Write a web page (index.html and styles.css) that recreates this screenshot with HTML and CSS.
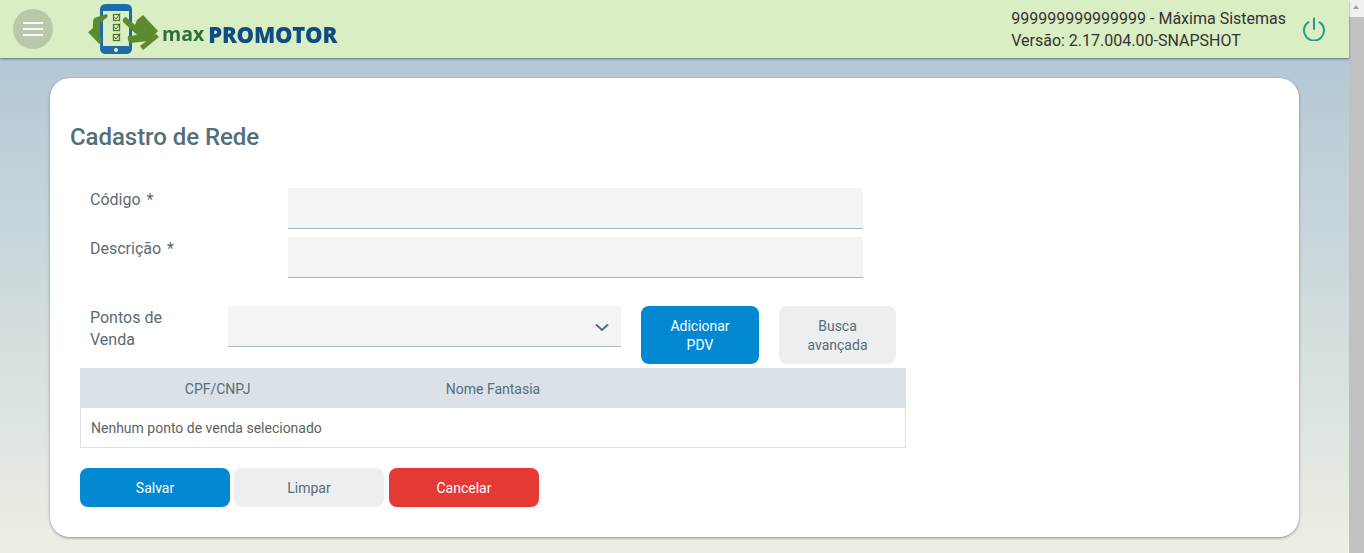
FILE: index.html
```html
<!DOCTYPE html>
<html lang="en">
<head>
    <meta charset="UTF-8">
    <title>maxPromotor</title>
    <link rel="stylesheet" href="styles.css">
</head>
<body>
    <div class="page">
        <div class="header">
            <button class="menu-button" aria-label="Menu">
                <span></span><span></span><span></span>
            </button>
            <div class="logo">
                <svg class="logo-icon" width="72" height="54" viewBox="0 0 72 54">
                    <!-- phone -->
                    <rect x="13.5" y="3.5" width="29" height="47" rx="4" fill="#d9eec2" stroke="#1f6aa8" stroke-width="3"/>
                    <rect x="13" y="3" width="30" height="6" rx="3" fill="#1f6aa8"/>
                    <rect x="13" y="44" width="30" height="7" rx="3" fill="#1f6aa8"/>
                    <circle cx="28" cy="48" r="2" fill="#e8f2f4"/>
                    <!-- left hand -->
                    <path d="M18.7 12 Q20.5 14 19.3 15.3 L12 21 V33.7 L13.7 38.7 L11.3 42 L0 30.3 L4.7 26.3 L5.3 17.7 Q6 15.5 9 15 Z" fill="#5b8a2f"/>
                    <!-- checklist -->
                    <rect x="25.5" y="12.5" width="6" height="6" fill="#e6f1d8" stroke="#4d7a2a" stroke-width="1.3"/>
                    <rect x="25.5" y="22.5" width="6" height="6" fill="#e6f1d8" stroke="#4d7a2a" stroke-width="1.3"/>
                    <rect x="25.5" y="32.5" width="6" height="6" fill="#e6f1d8" stroke="#4d7a2a" stroke-width="1.3"/>
                    <path d="M26.5 15 L28 17 L32 11.5 M26.5 25 L28 27 L32 21.5 M26.5 35 L28 37 L32 31.5" fill="none" stroke="#3d6a22" stroke-width="1"/>
                    <!-- right hand -->
                    <path d="M35 20 Q34 16 38 15 L47 23 L49 18 L55 13 L70 29 L61 39 L42 41 Q39 39 40 34 L49 33 Z" fill="#5b8a2f"/>
                    <path d="M52 44 L68 32 L71 35 L55 48 Z" fill="#5b8a2f"/>
                </svg>
                <span class="logo-max">max</span><span class="logo-name">PROMOTOR</span>
            </div>
            <div class="user-info">
                <div>999999999999999 - Máxima Sistemas</div>
                <div>Versão: 2.17.004.00-SNAPSHOT</div>
            </div>
            <svg class="power-icon" width="24" height="24" viewBox="0 0 24 24" fill="none" stroke="#1f9c8b" stroke-width="2" stroke-linecap="round">
                <path d="M12 1.5 V12"/>
                <path d="M6.5 5.2 A10 10 0 1 0 17.5 5.2"/>
            </svg>
        </div>

        <div class="content">
            <div class="card">
                <h1>Cadastro de Rede</h1>

                <div class="field-row">
                    <label>Código <span class="required">*</span></label>
                    <div class="input"></div>
                </div>
                <div class="field-row">
                    <label>Descrição <span class="required">*</span></label>
                    <div class="input"></div>
                </div>

                <div class="pdv-row">
                    <label>Pontos de Venda</label>
                    <div class="input select">
                        <svg width="14" height="9" viewBox="0 0 14 9" fill="none" stroke="#546e7a" stroke-width="2">
                            <path d="M1 1.5 L7 7 L13 1.5"/>
                        </svg>
                    </div>
                    <button class="btn btn-blue btn-pdv">Adicionar PDV</button>
                    <button class="btn btn-grey btn-search">Busca avançada</button>
                </div>

                <div class="table">
                    <div class="table-head">
                        <div>CPF/CNPJ</div>
                        <div>Nome Fantasia</div>
                        <div></div>
                    </div>
                    <div class="table-empty">Nenhum ponto de venda selecionado</div>
                </div>

                <div class="actions">
                    <button class="btn btn-blue">Salvar</button>
                    <button class="btn btn-grey">Limpar</button>
                    <button class="btn btn-red">Cancelar</button>
                </div>
            </div>
        </div>
    </div>

    <div class="scrollbar">
        <div class="scroll-arrow"></div>
        <div class="scroll-thumb"></div>
    </div>
</body>
</html>
```

FILE: styles.css
```css
html, body {
    height: 100%;
}

body {
    font-family: Roboto, sans-serif;
    margin: 0;
    padding: 0;
    display: flex;
    height: 553px;
    overflow: hidden;
    background-color: #ecefe4;
}

.page {
    flex: 1;
    min-width: 0;
    display: flex;
    flex-direction: column;
    background: linear-gradient(#adc4d3, #ecefe4);
}

.header {
    height: 58px;
    flex-shrink: 0;
    display: flex;
    align-items: center;
    background-color: #d9eec2;
    box-shadow: 0 1px 2px rgba(0, 0, 0, 0.45);
    color: #333;
    position: relative;
}

.menu-button {
    width: 40px;
    height: 40px;
    margin-left: 13px;
    padding: 0;
    border: none;
    border-radius: 50%;
    background-color: #b7c9a8;
    display: flex;
    flex-direction: column;
    justify-content: center;
    align-items: center;
    gap: 4px;
}

.menu-button span {
    display: block;
    width: 20px;
    height: 2px;
    background-color: white;
}

.logo {
    display: flex;
    align-items: center;
    margin-left: 35px;
    height: 58px;
    font-family: "Open Sans", sans-serif;
    font-weight: 800;
    filter: blur(0.4px); /* logo is a scaled up image in the app */
}

.logo-icon {
    flex-shrink: 0;
}

.logo-max {
    color: #2f6f3c;
    margin-left: 2px;
    margin-top: 9px;
    font-size: 19.5px;
    font-weight: 700;
}

.logo-name {
    color: #0f4c81;
    margin-left: 4px;
    margin-top: 9px;
    font-size: 22px;
    letter-spacing: -0.2px;
}

.user-info {
    margin-left: auto;
    margin-right: -1px;
    padding-top: 2px;
    font-size: 16px;
    line-height: 22px;
}

.power-icon {
    margin: 0 23px 0 17px;
}

.content {
    flex: 1;
    min-height: 0;
    padding: 20px 50px 16px;
}

.card {
    height: 459px;
    box-sizing: border-box;
    padding: 45px 20px 0;
    background-color: white;
    border-radius: 20px;
    box-shadow: 0 1px 3px rgba(0, 0, 0, 0.4);
    color: #5b6b75;
}

h1 {
    margin: 0 0 37px;
    height: 28px;
    font-size: 24px;
    line-height: 28px;
    font-weight: 500;
    letter-spacing: -0.05px;
    color: #546e7a;
}

label {
    font-size: 16px;
    line-height: 22px;
}

.required {
    margin-left: 2px;
}

.field-row {
    display: flex;
    margin: 0 0 8px 20px;
}

.field-row label {
    width: 198px;
    padding-top: 1px;
}

.input {
    height: 40px;
    background-color: #f4f4f4;
    border-bottom: 1px solid #a9b8c3;
}

.field-row .input {
    width: 575px;
}

.pdv-row {
    display: flex;
    align-items: flex-start;
    margin: 28px 0 4px 20px;
}

.pdv-row label {
    width: 110px;
    margin-right: 28px;
    padding-top: 1px;
}

.select {
    width: 393px;
    display: flex;
    align-items: center;
    justify-content: flex-end;
    padding-top: 3px;
    height: 37px;
}

.select svg {
    margin-right: 12px;
}

.btn {
    width: 150px;
    height: 39px;
    padding: 2px 0 0;
    border: none;
    border-radius: 8px;
    font-family: Roboto, sans-serif;
    font-size: 14px;
    line-height: 19px;
}

.btn-blue {
    background-color: #0288d1;
    color: white;
}

.btn-grey {
    background-color: #eceff1;
    color: #5b6b75;
}

.btn-red {
    background-color: #e53935;
    color: white;
    margin-left: 1px;
}

.btn-pdv {
    width: 118px;
    height: 58px;
    margin-left: 20px;
    padding: 2px 25px 0;
}

.btn-search {
    width: 117px;
    height: 58px;
    margin-left: 20px;
    padding: 2px 20px 0;
}

.table {
    width: 826px;
    margin-left: 10px;
    box-sizing: border-box;
    border: 1px solid #e0e0e0;
    border-top: none;
    font-size: 14px;
}

.table-head {
    display: grid;
    grid-template-columns: 1fr 1fr 1fr;
    height: 40px;
    margin: 0 -1px;
    line-height: 42px;
    text-align: center;
    background-color: #dae2e8;
    color: #546e7a;
}

.table-empty {
    height: 39px;
    line-height: 40px;
    padding-left: 10px;
    color: #616161;
}

.actions {
    display: flex;
    gap: 4px;
    margin: 20px 0 0 10px;
}

.scrollbar {
    width: 15px;
    flex-shrink: 0;
    background-color: #f1f1f1;
    display: flex;
    flex-direction: column;
}

.scroll-arrow {
    height: 17px;
    box-sizing: border-box;
    position: relative;
}

.scroll-arrow::before {
    content: "";
    position: absolute;
    left: 4px;
    top: 5px;
    border-left: 3.5px solid transparent;
    border-right: 3.5px solid transparent;
    border-bottom: 4px solid #a3a3a3;
}

.scroll-thumb {
    flex: 1;
    background-color: #c1c1c1;
}
```
